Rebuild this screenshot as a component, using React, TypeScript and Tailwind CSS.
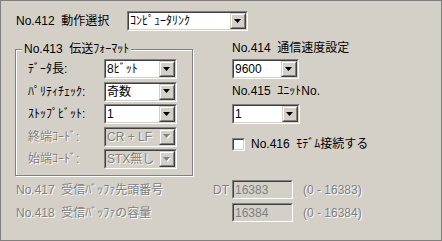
import React from "react";

const face = "font-['Liberation_Sans','Noto_Sans_CJK_JP',sans-serif]";
const dim = "text-[#808080] [text-shadow:1px_1px_0_#ffffff]";

function Arrow({ disabled }: { disabled?: boolean }) {
    return (
        <div className="w-[16px] h-full border border-t-[#d4d0c8] border-l-[#d4d0c8] border-r-[#404040] border-b-[#404040]">
            <div className="w-full h-full flex items-center justify-center bg-[#d4d0c8] border border-t-white border-l-white border-r-[#808080] border-b-[#808080]">
                <svg width="8" height="5" viewBox="0 0 8 5">
                    {disabled && <path d="M1 1h7l-3.5 4z" fill="#ffffff" />}
                    <path d="M0 0h7l-3.5 4z" fill={disabled ? "#808080" : "#000000"} />
                </svg>
            </div>
        </div>
    );
}

// sunken 2px frame used by combos, edits and the checkbox
function Sunken({ className, children }: { className: string; children?: React.ReactNode }) {
    return (
        <div className={`border border-t-[#808080] border-l-[#808080] border-r-white border-b-white ${className}`}>
            <div className="w-full h-full flex border border-t-[#404040] border-l-[#404040] border-r-[#d4d0c8] border-b-[#d4d0c8]">
                {children}
            </div>
        </div>
    );
}

function Combo({ value, className, disabled }: { value: string; className: string; disabled?: boolean }) {
    return (
        <Sunken className={`h-[20px] shrink-0 ${className}`}>
            <div className={`flex-1 flex items-center pl-[1px] leading-none ${disabled ? `bg-[#d4d0c8] ${dim}` : "bg-white text-black"}`}>
                {value}
            </div>
            <Arrow disabled={disabled} />
        </Sunken>
    );
}

function Edit({ value }: { value: string }) {
    return (
        <Sunken className="w-[61px] h-[19px] shrink-0">
            <div className="flex-1 flex items-center pl-[1px] bg-[#d4d0c8] text-[#808080] leading-none">{value}</div>
        </Sunken>
    );
}

function Row({ label, value, disabled }: { label: string; value: string; disabled?: boolean }) {
    return (
        <div className="flex items-center h-[20px]">
            <span className={`w-[76px] ${disabled ? dim : "text-black"}`}>{label}</span>
            <Combo value={value} className="w-[73px]" disabled={disabled} />
        </div>
    );
}

export default function App() {
    return (
        <div className={`w-[442px] h-[241px] bg-[#d4d0c8] border border-[#808080] text-[12px] whitespace-pre ${face}`}>
            {/* No.412 */}
            <div className="flex items-center h-[20px] mt-[10px] pl-[15px]">
                <span className="w-[111px]">No.412  動作選択</span>
                <Combo value="ｺﾝﾋﾟｭｰﾀﾘﾝｸ" className="w-[121px]" />
            </div>

            <div className="flex items-start mt-[7px]">
                {/* No.413 group */}
                <div className="relative mt-[11px] ml-[14px] w-[178px] h-[127px] border border-[#808080] [box-shadow:1px_1px_0_#ffffff,inset_1px_1px_0_#ffffff]">
                    <span className="absolute -top-[8px] left-[6px] px-[2px] bg-[#d4d0c8] leading-[14px]">No.413  伝送ﾌｫｰﾏｯﾄ</span>
                    <div className="flex flex-col gap-[2.5px] pt-[9px] pl-[12px]">
                        <Row label="ﾃﾞｰﾀ長:" value="8ﾋﾞｯﾄ" />
                        <Row label="ﾊﾟﾘﾃｨﾁｪｯｸ:" value="奇数" />
                        <Row label="ｽﾄｯﾌﾟﾋﾞｯﾄ:" value="1" />
                        <Row label="終端ｺｰﾄﾞ:" value="CR + LF" disabled />
                        <Row label="始端ｺｰﾄﾞ:" value="STX無し" disabled />
                    </div>
                </div>

                {/* right column */}
                <div className="flex flex-col ml-[39px]">
                    <div className="h-[20px] flex items-center">No.414  通信速度設定</div>
                    <Combo value="9600" className="w-[67px] mt-[1px]" />
                    <div className="h-[20px] flex items-center mt-[2px]">No.415  ﾕﾆｯﾄNo.</div>
                    <Combo value="1" className="w-[68px] mt-[3px]" />
                    <div className="h-[20px] flex items-center gap-[6px] mt-[10px]">
                        <Sunken className="w-[13px] h-[13px]">
                            <div className="flex-1 bg-white" />
                        </Sunken>
                        <span>No.416  ﾓﾃﾞﾑ接続する</span>
                    </div>
                </div>
            </div>

            {/* buffer settings */}
            <div className="flex flex-col gap-[4px] mt-[4px] pl-[15px]">
                <div className="flex items-center h-[19px]">
                    <span className={`w-[197px] ${dim}`}>No.417  受信ﾊﾞｯﾌｧ先頭番号</span>
                    <span className={`w-[19px] ${dim}`}>DT</span>
                    <Edit value="16383" />
                    <span className={`ml-[10px] ${dim}`}>(0 - 16383)</span>
                </div>
                <div className="flex items-center h-[19px]">
                    <span className={`w-[216px] ${dim}`}>No.418  受信ﾊﾞｯﾌｧの容量</span>
                    <Edit value="16384" />
                    <span className={`ml-[10px] ${dim}`}>(0 - 16384)</span>
                </div>
            </div>
        </div>
    );
}
